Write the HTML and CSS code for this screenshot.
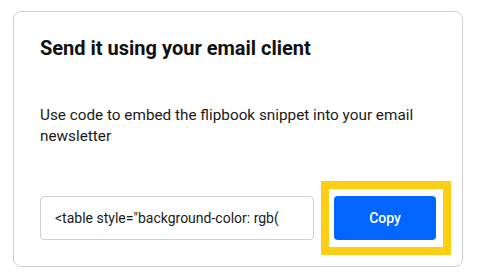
FILE: index.html
```html
<!DOCTYPE html>
<html>
<head>
<meta charset="utf-8">
<link rel="stylesheet" href="styles.css">
</head>
<body>
<div class="card">
  <h2 class="title">Send it using your email client</h2>
  <p class="desc">Use code to embed the flipbook snippet into your email newsletter</p>
  <div class="row">
    <div class="code">&lt;table style="background-color: rgb(</div>
    <div class="btn-wrap">
      <button class="copy">Copy</button>
    </div>
  </div>
</div>
</body>
</html>
```
FILE: styles.css
```css
html, body {
  margin: 0;
  padding: 0;
  background: #ffffff;
}
body {
  padding: 11px 19px 0 13px;
  font-family: Roboto, "Liberation Sans", sans-serif;
  color: #1a1a1a;
}
.card {
  box-sizing: border-box;
  width: 450px;
  height: 256px;
  border: 1px solid #cfcfcf;
  border-radius: 8px;
  padding: 25px 26px 26px 26px;
  display: flex;
  flex-direction: column;
}
.title {
  margin: 0;
  font-size: 20px;
  font-weight: 700;
  line-height: 23px;
  color: #111;
}
.desc {
  margin: 45px 0 0 0;
  font-size: 15.3px;
  line-height: 21px;
  color: #1a1a1a;
}
.row {
  margin-top: auto;
  display: flex;
  gap: 20px;
  align-items: center;
}
.code {
  box-sizing: border-box;
  width: 274px;
  height: 44px;
  border: 1px solid #cfcfcf;
  border-radius: 4px;
  padding: 0 14px;
  display: flex;
  align-items: center;
  font-size: 14px;
  color: #1a1a1a;
  white-space: nowrap;
  overflow: hidden;
}
.btn-wrap {
  position: relative;
  width: 102px;
  height: 44px;
}
.btn-wrap::after {
  content: "";
  position: absolute;
  top: -15px;
  bottom: -15px;
  left: -13px;
  right: -15px;
  border: 8px solid #fccf14;
  pointer-events: none;
}
.copy {
  width: 102px;
  height: 44px;
  border: 0;
  border-radius: 4px;
  background: #0066ff;
  color: #ffffff;
  font-family: Roboto, "Liberation Sans", sans-serif;
  font-size: 14px;
  font-weight: 500;
  padding: 0;
}
```
